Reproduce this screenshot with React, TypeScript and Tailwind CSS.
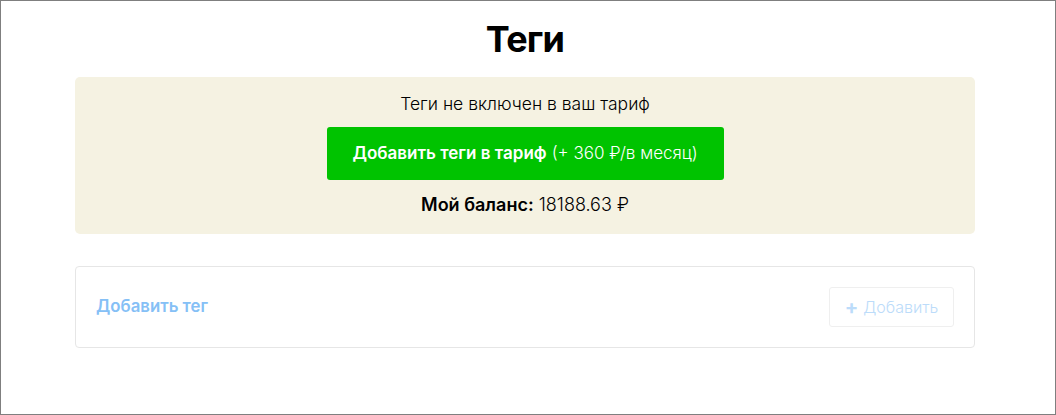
import React from "react";

export default function App() {
  return (
    <div
      className="w-[1056px] h-[415px] border border-[#7f7f7f] bg-white text-black"
      style={{ fontFamily: "Inter, 'Noto Sans', sans-serif" }}
    >
      <div className="w-[900px] ml-[74px]">
        <h1 className="text-center text-[36px] leading-[44px] font-bold mt-[16px] tracking-[-0.8px]">
          Теги
        </h1>
        <div className="mt-[16px] bg-[#f5f2e2] rounded-[5px] pt-[15px] pb-[17px] flex flex-col items-center">
          <div className="text-[17.5px] leading-[24px] font-light">Теги не включен в ваш тариф</div>
          <button className="mt-[11px] h-[53px] w-[397px] bg-[#00c300] rounded-[3px] text-white text-[17px] flex items-center justify-center">
            <span className="font-semibold">Добавить теги в тариф</span>
            <span className="font-light ml-[5px]">(+ 360 ₽/в месяц)</span>
          </button>
          <div className="mt-[13px] text-[18px] leading-[24px]">
            <span className="font-semibold">Мой баланс:</span>{" "}
            <span className="font-light">18188.63 ₽</span>
          </div>
        </div>
        <div className="mt-[32px] border border-[#e6e6e6] rounded-[4px] p-5 flex items-center justify-between">
          <div className="text-[16.8px] font-semibold text-[#85c0f6]">Добавить тег</div>
          <button className="h-[40px] w-[125px] border border-[#efefef] rounded-[3px] flex items-center justify-center text-[16px] text-[#bcdcfa] font-light">
            <span className="font-bold mr-[5px] text-[20px] leading-none">+</span>
            Добавить
          </button>
        </div>
      </div>
    </div>
  );
}
